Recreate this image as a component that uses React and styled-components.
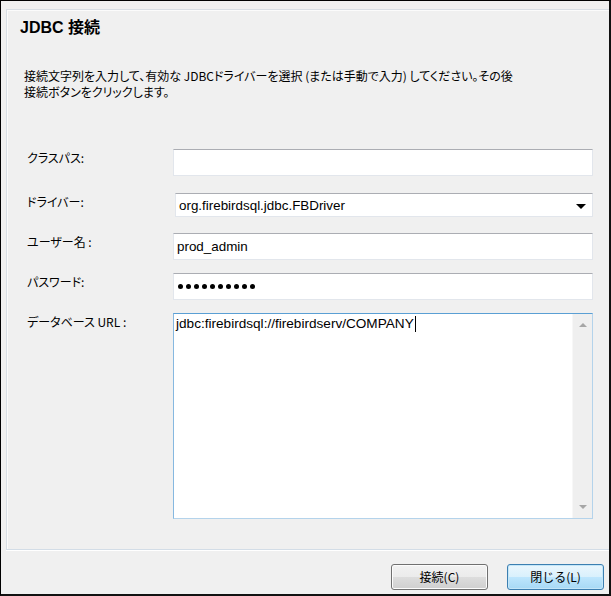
import styled, { createGlobalStyle } from "styled-components";

const GlobalStyle = createGlobalStyle`
  html, body {
    margin: 0;
    padding: 0;
    background: #ffffff;
  }
  * {
    box-sizing: border-box;
  }
`;

const jp = `"Noto Sans CJK JP", "Noto Sans", sans-serif`;
const latin = `"Liberation Sans", Arial, "Noto Sans CJK JP", sans-serif`;

const Frame = styled.div`
  display: flex;
  flex-direction: column;
  width: 611px;
  height: 596px;
  padding: 8px 0 0 5px;
  border-top: 1px solid #000;
  border-left: 1px solid #000;
  border-right: 2px solid #111;
  border-bottom: 2px solid #111;
  background: #f0f0f0;
  overflow: hidden;
`;

const Panel = styled.div`
  display: flex;
  flex-direction: column;
  flex-shrink: 0;
  height: 541px;
  border-top: 1px solid #d8dee4;
  border-left: 1px solid #d8dee4;
  border-bottom: 1px solid #d3dde7;
  box-shadow: inset 1px 1px 0 #fbfbfb, 0 1px 0 #ffffff;
`;

const Title = styled.h1`
  margin: 8px 0 0 13px;
  font-family: ${latin};
  font-size: 16px;
  font-weight: bold;
  line-height: 20px;
  color: #000;
`;

const Description = styled.p`
  margin: 30px 0 0 17px;
  font-family: ${jp};
  font-size: 12px;
  line-height: 16px;
  color: #000;
  font-feature-settings: "palt";
  white-space: nowrap;
`;

const Form = styled.div`
  display: flex;
  flex-direction: column;
  margin-top: 49px;
  padding-left: 20px;
`;

const Row = styled.div`
  display: grid;
  grid-template-columns: 146px 420px;
  align-items: start;
  margin-top: ${(p) => p.$top || 0}px;
`;

const Label = styled.label`
  font-family: ${jp};
  font-size: 12px;
  line-height: 18px;
  color: #000;
  font-feature-settings: "palt";
`;

const Field = styled.div`
  position: relative;
  display: flex;
  align-items: center;
  height: ${(p) => p.$h || 27}px;
  margin-left: ${(p) => p.$shift || 0}px;
  padding: 0 3px;
  border: 1px solid #e2e6ec;
  border-top-color: #abadb3;
  background: #ffffff;
  font-family: ${latin};
  font-size: 13.4px;
  color: #000;
`;

const DropArrow = styled.span`
  position: absolute;
  right: 6px;
  top: 10px;
  width: 0;
  height: 0;
  border-left: 5px solid transparent;
  border-right: 5px solid transparent;
  border-top: 5px solid #000;
`;

const Mask = styled.div`
  display: flex;
  gap: 3px;
  padding-left: 1px;
`;

const Dot = styled.span`
  width: 5px;
  height: 5px;
  border-radius: 50%;
  background: #000;
`;

const TextArea = styled.div`
  display: flex;
  height: 206px;
  border: 1px solid #b4d3eb;
  border-top-color: #5a9fd4;
  border-left-color: #86b8e0;
  background: #ffffff;
`;

const TextBody = styled.div`
  flex: 1;
  padding: 2px 2px;
  font-family: ${latin};
  font-size: 13.6px;
  line-height: 16px;
  color: #000;
`;

const Caret = styled.span`
  display: inline-block;
  width: 1px;
  height: 16px;
  margin-left: 1px;
  vertical-align: top;
  background: #000;
`;

const ScrollBar = styled.div`
  display: flex;
  flex-direction: column;
  justify-content: space-between;
  align-items: center;
  width: 20px;
  padding: 9px 0 9px;
  border-left: 1px solid #f7f7f7;
  background: #efefef;
`;

const Arrow = styled.span`
  width: 0;
  height: 0;
  border-left: 4px solid transparent;
  border-right: 4px solid transparent;
  ${(p) =>
    p.$down ? "border-top: 4px solid #a6a6a6;" : "border-bottom: 4px solid #a6a6a6;"}
`;

const Footer = styled.div`
  display: flex;
  justify-content: flex-end;
  align-items: flex-start;
  gap: 19px;
  flex: 1;
  padding: 14px 5px 0 0;
`;

const Button = styled.button`
  width: 97px;
  height: 26px;
  padding: 0;
  border: 1px solid ${(p) => (p.$primary ? "#3c7fb1" : "#707070")};
  border-radius: 3px;
  background: ${(p) =>
    p.$primary
      ? "linear-gradient(#eaf6fd 0%, #d9f0fc 50%, #bee6fd 50%, #a7d9f5 100%)"
      : "linear-gradient(#f2f2f2 0%, #ebebeb 50%, #dddddd 50%, #cfcfcf 100%)"};
  box-shadow: inset 0 0 0 1px ${(p) => (p.$primary ? "#c4e6f8" : "#fcfcfc")};
  font-family: ${jp};
  font-size: 12px;
  line-height: 16px;
  color: #000;
  cursor: pointer;
`;

function App() {
  return (
    <>
      <GlobalStyle />
      <Frame>
        <Panel>
          <Title>JDBC 接続</Title>
          <Description>
            接続文字列を入力して、有効な JDBCドライバーを選択 (または手動で入力) してください。その後
            <br />
            接続ボタンをクリックします。
          </Description>
          <Form>
            <Row>
              <Label>クラスパス:</Label>
              <Field $h={27} />
            </Row>
            <Row $top={17}>
              <Label>ドライバー:</Label>
              <Field $h={24} $shift={2}>
                org.firebirdsql.jdbc.FBDriver
                <DropArrow />
              </Field>
            </Row>
            <Row $top={16}>
              <Label>ユーザー名 :</Label>
              <Field $h={27}>prod_admin</Field>
            </Row>
            <Row $top={13}>
              <Label>パスワード:</Label>
              <Field $h={27}>
                <Mask>
                  {Array.from({ length: 10 }, (_, i) => (
                    <Dot key={i} />
                  ))}
                </Mask>
              </Field>
            </Row>
            <Row $top={13}>
              <Label>データベース URL :</Label>
              <TextArea>
                <TextBody>
                  jdbc:firebirdsql://firebirdserv/COMPANY
                  <Caret />
                </TextBody>
                <ScrollBar>
                  <Arrow />
                  <Arrow $down />
                </ScrollBar>
              </TextArea>
            </Row>
          </Form>
        </Panel>
        <Footer>
          <Button>接続(C)</Button>
          <Button $primary>閉じる(L)</Button>
        </Footer>
      </Frame>
    </>
  );
}

export default App;
